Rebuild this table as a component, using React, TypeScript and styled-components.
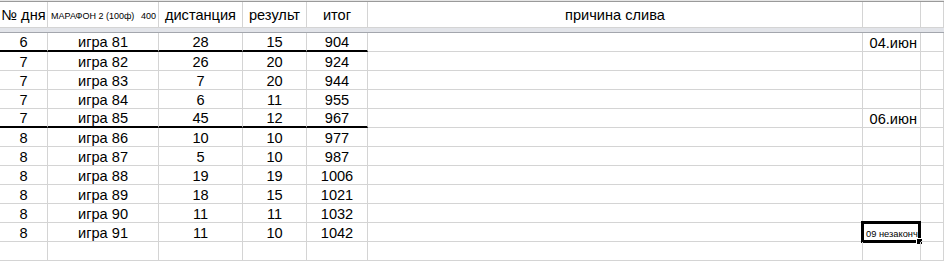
import React from "react";
import styled, { createGlobalStyle } from "styled-components";

const Global = createGlobalStyle`
  html, body { margin: 0; padding: 0; background: #fff; }
  body { font-family: Arial, "Liberation Sans", sans-serif; color: #000; }
`;

const COLS = "48px 111px 84px 64px 61px 495px 58px 23px";
const GRID = "#d4d4d4";

const Sheet = styled.div`
  width: 944px;
  height: 263px;
  overflow: hidden;
  border-top: 1px solid #e6e6e6;
`;

const TopRule = styled.div`
  height: 1px;
  background: #9a9a9a;
`;

const Row = styled.div<{ $h: number }>`
  display: grid;
  grid-template-columns: ${COLS};
  height: ${(p) => p.$h}px;
`;

const Cell = styled.div<{ $align?: "left" | "center" | "right"; $thick?: boolean; $valign?: "center" | "end" }>`
  box-sizing: border-box;
  position: relative;
  display: flex;
  align-items: ${(p) => (p.$valign === "end" ? "flex-end" : "center")};
  justify-content: ${(p) =>
    p.$align === "left" ? "flex-start" : p.$align === "right" ? "flex-end" : "center"};
  border-right: 1px solid ${GRID};
  border-bottom: ${(p) => (p.$thick ? "2px solid #000" : `1px solid ${GRID}`)};
  font-size: 14.6px;
  line-height: 16px;
  white-space: nowrap;
  padding: 1px 3px 0;
`;

const SmallHead = styled(Cell)`
  justify-content: space-between;
  font-size: 9px;
  line-height: 10px;
  padding: 0 2px 6px 3px;
`;

const Band = styled.div`
  height: 4px;
  background: #e2e4e9;
  border-bottom: 1px solid #a3a6ad;
`;

const Selection = styled.div`
  position: absolute;
  left: -2px;
  top: -2px;
  right: -1px;
  bottom: -2px;
  border: 3px solid #000;
  box-sizing: border-box;
  pointer-events: none;
`;

const Handle = styled.div`
  position: absolute;
  right: -5px;
  bottom: -5px;
  width: 5px;
  height: 5px;
  background: #000;
  border: 1px solid #fff;
`;

const SmallText = styled.span`
  font-size: 9.3px;
  line-height: 10px;
  padding-bottom: 2px;
`;

type Data = { day: string; game: string; dist: string; res: string; total: string; date?: string; note?: string; thick?: boolean };

const rows: Data[] = [
  { day: "6", game: "игра 81", dist: "28", res: "15", total: "904", date: "04.июн", thick: true },
  { day: "7", game: "игра 82", dist: "26", res: "20", total: "924" },
  { day: "7", game: "игра 83", dist: "7", res: "20", total: "944" },
  { day: "7", game: "игра 84", dist: "6", res: "11", total: "955" },
  { day: "7", game: "игра 85", dist: "45", res: "12", total: "967", date: "06.июн", thick: true },
  { day: "8", game: "игра 86", dist: "10", res: "10", total: "977" },
  { day: "8", game: "игра 87", dist: "5", res: "10", total: "987" },
  { day: "8", game: "игра 88", dist: "19", res: "19", total: "1006" },
  { day: "8", game: "игра 89", dist: "18", res: "15", total: "1021" },
  { day: "8", game: "игра 90", dist: "11", res: "11", total: "1032" },
  { day: "8", game: "игра 91", dist: "11", res: "10", total: "1042", note: "09 незаконч" },
  { day: "", game: "", dist: "", res: "", total: "" },
];

export default function App() {
  return (
    <>
      <Global />
      <Sheet>
        <TopRule />
        <Row $h={26}>
          <Cell>№ дня</Cell>
          <SmallHead $valign="end">
            <span>МАРАФОН 2 (100ф)</span>
            <span>400</span>
          </SmallHead>
          <Cell>дистанция</Cell>
          <Cell>результ</Cell>
          <Cell>итог</Cell>
          <Cell>причина слива</Cell>
          <Cell />
          <Cell />
        </Row>
        <Band />
        {rows.map((r, i) => (
          <Row $h={19} key={i}>
            <Cell $thick={r.thick}>{r.day}</Cell>
            <Cell $thick={r.thick}>{r.game}</Cell>
            <Cell $thick={r.thick}>{r.dist}</Cell>
            <Cell $thick={r.thick}>{r.res}</Cell>
            <Cell $thick={r.thick}>{r.total}</Cell>
            <Cell />
            {r.note ? (
              <Cell $align="left" $valign="end">
                <SmallText>{r.note}</SmallText>
                <Selection>
                  <Handle />
                </Selection>
              </Cell>
            ) : (
              <Cell $align="right">{r.date}</Cell>
            )}
            <Cell />
          </Row>
        ))}
      </Sheet>
    </>
  );
}
